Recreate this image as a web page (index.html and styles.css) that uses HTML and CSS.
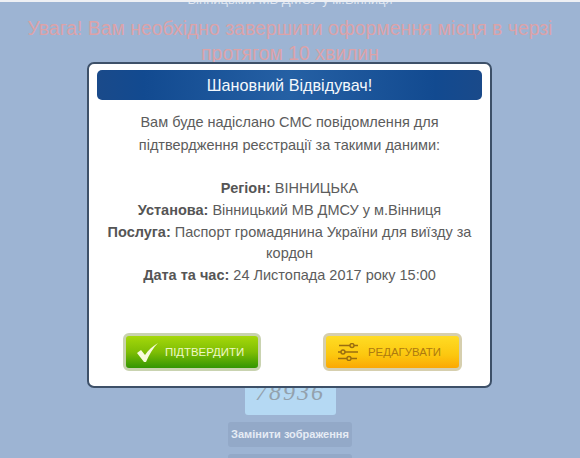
FILE: index.html
```html
<!DOCTYPE html>
<html lang="uk">
<head>
<meta charset="utf-8">
<title>Підтвердження</title>
<link rel="stylesheet" href="styles.css">
</head>
<body>
<div class="page">
  <p class="clipped">Вінницький МВ ДМСУ у м.Вінниця</p>
  <p class="warning">Увага! Вам необхідно завершити оформення місця в черзі протягом 10 хвилин</p>
  <div class="captcha"><span class="captcha-text">78936</span></div>
  <div class="grey-btn">Замінити зображення</div>
  <div class="grey-btn next"></div>
</div>
<div class="modal">
  <h1 class="modal-title">Шановний Відвідувач!</h1>
  <div class="modal-body">
    <p class="intro">Вам буде надіслано СМС повідомлення для<br>підтвердження реєстрації за такими даними:</p>
    <p class="gap"><b>Регіон:</b> ВІННИЦЬКА</p>
    <p><b>Установа:</b> Вінницький МВ ДМСУ у м.Вінниця</p>
    <p><b>Послуга:</b> Паспорт громадянина України для виїзду за кордон</p>
    <p><b>Дата та час:</b> 24 Листопада 2017 року 15:00</p>
  </div>
  <div class="actions">
    <div class="action confirm">
      <svg class="check" width="21" height="19" viewBox="0 0 21 19"><path d="M0 10 L4 7 L8 12 C11 7 16 3 21 0 C16 5 12 12 9 19 L7 19 Z" fill="#f7fbdc"/></svg>
      <span>ПІДТВЕРДИТИ</span>
    </div>
    <div class="action edit">
      <svg class="sliders" width="20" height="18" viewBox="0 0 20 18" fill="none" stroke="#9a6e10" stroke-width="1.400"><path d="M1 2.500H20M0 9H20M0 15.500H19"/><circle cx="14" cy="2.500" r="2" fill="#f9c512"/><circle cx="5" cy="9" r="2" fill="#f9c512"/><circle cx="11" cy="15.500" r="2" fill="#f9c512"/></svg>
      <span>РЕДАГУВАТИ</span>
    </div>
  </div>
</div>
</body>
</html>
```

FILE: styles.css
```css
* { box-sizing: border-box; }
html, body { margin: 0; height: 100%; }
body {
  position: relative;
  height: 458px;
  overflow: hidden;
  background: #9db4d3;
  border-top: 2px solid #eef0f4;
  font-family: "Liberation Sans", Arial, sans-serif;
}
.page { display: flex; flex-direction: column; align-items: center; height: 456px; overflow: hidden; }
.clipped { margin: -10px 0 0; font-size: 13px; line-height: 15px; color: #dfe6f1; }
.warning {
  width: 540px;
  margin: 9px 0 0;
  text-align: center;
  font-size: 19.400px;
  line-height: 25px;
  color: #dca2a8;
}
.captcha {
  flex: none;
  width: 91px;
  height: 63px;
  margin-top: 286px;
  padding-top: 25px;
  border-radius: 3px;
  background: #b5d9f3;
  text-align: center;
}
.captcha-text { font: italic 24px/30px "Liberation Serif", serif; letter-spacing: 2px; color: #93a1ad; }
.grey-btn {
  flex: none;
  width: 124px;
  height: 25px;
  margin-top: 7px;
  border-radius: 3px;
  background: #93a9c8;
  color: #e6ecf5;
  font-size: 11px;
  font-weight: 700;
  line-height: 25px;
  text-align: center;
}
.next { margin-top: 7px; }
.modal {
  position: absolute;
  left: 87px;
  top: 60px;
  width: 405px;
  height: 326px;
  display: flex;
  flex-direction: column;
  padding: 6px 8px 0;
  background: #fff;
  border: 2px solid #3d5068;
  border-radius: 7px;
}
.modal-title {
  margin: 0;
  flex: none;
  height: 30px;
  border-radius: 5px;
  background: linear-gradient(90deg, #1a4a8a 0%, #124a90 12%, #2560a4 50%, #124a90 88%, #1a4a8a 100%);
  color: #f4f8fc;
  font-size: 16.200px;
  font-weight: 400;
  line-height: 30px;
  text-align: center;
}
.modal-body {
  padding: 11px 6px 0;
  color: #5c5c5c;
  font-size: 14.500px;
  line-height: 21.750px;
  text-align: center;
}
.modal-body p { margin: 0; }
.modal-body .intro { line-height: 23px; }
.modal-body .gap { margin-top: 21px; }
.modal-body b { color: #555; }
.actions { display: flex; justify-content: center; gap: 62px; margin-top: auto; margin-bottom: 15px; padding-left: 6px; }
.action {
  display: flex;
  align-items: center;
  width: 138px;
  height: 38px;
  border: 3px solid #c9d3b0;
  border-radius: 6px;
  font-size: 11.400px;
}
.confirm {
  padding-left: 11px;
  gap: 7px;
  background: linear-gradient(#a5d80a 0%, #7fbe05 50%, #339602 100%);
  color: #eef8c8;
}
.edit {
  width: 139px;
  padding-left: 12px;
  gap: 10px;
  border-color: #d6cfae;
  background: linear-gradient(#ffdc24 0%, #fcc70f 60%, #fba802 100%);
  color: #ad7a10;
}
.sliders, .check { flex: none; }
```
